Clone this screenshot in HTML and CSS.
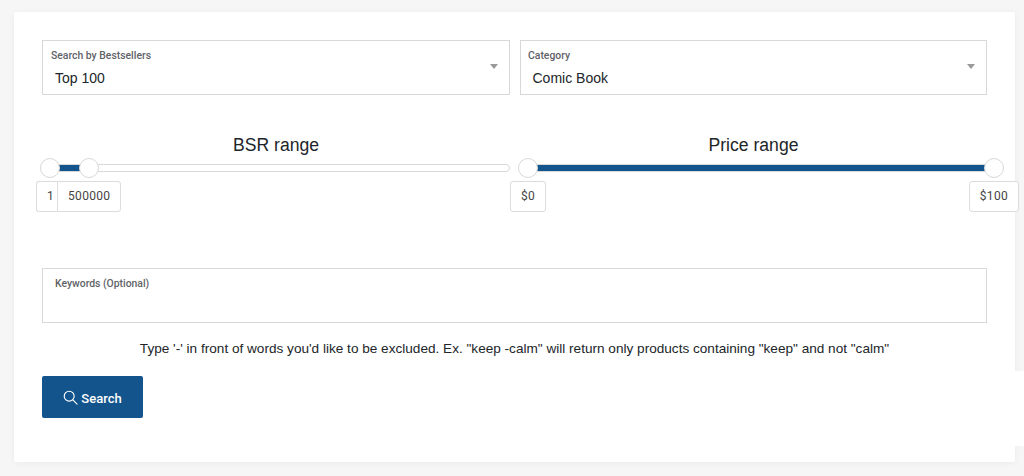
FILE: index.html
```html
<!DOCTYPE html>
<html lang="en">
<head>
<meta charset="utf-8">
<title>Search</title>
<link rel="stylesheet" href="styles.css">
</head>
<body>
<main class="card">
  <section class="selects">
    <div class="field select">
      <span class="field-label">Search by Bestsellers</span>
      <span class="select-value">Top 100</span>
      <span class="caret"></span>
    </div>
    <div class="field select">
      <span class="field-label">Category</span>
      <span class="select-value">Comic Book</span>
      <span class="caret"></span>
    </div>
  </section>
  <section class="ranges">
    <div class="range range-bsr">
      <h2 class="range-title">BSR range</h2>
      <div class="slider">
        <span class="fill fill-bsr"></span>
        <span class="handle handle-a"></span>
        <span class="handle handle-b"></span>
      </div>
      <div class="values">
        <span class="value value-first">1</span><span class="value value-joined">500000</span>
      </div>
    </div>
    <div class="range range-price">
      <h2 class="range-title">Price range</h2>
      <div class="slider slider-price">
        <span class="fill fill-price"></span>
        <span class="handle handle-c"></span>
        <span class="handle handle-d"></span>
      </div>
      <div class="values values-price">
        <span class="value">$0</span>
        <span class="value">$100</span>
      </div>
    </div>
  </section>
  <section class="field keywords">
    <span class="field-label">Keywords (Optional)</span>
  </section>
  <p class="hint">Type '-' in front of words you'd like to be excluded. Ex. "keep -calm" will return only products containing "keep" and not "calm"</p>
  <div class="actions">
    <button class="search" type="button">
      <svg class="search-icon" width="15" height="15" viewBox="0 0 16 16" fill="none" stroke="currentColor" stroke-width="1.2" aria-hidden="true"><circle cx="6.6" cy="6.6" r="5.3"/><path d="M10.5 10.5 15 15" stroke-linecap="round"/></svg>
      <span class="search-label">Search</span>
    </button>
  </div>
</main>
</body>
</html>
```

FILE: styles.css
```css
* { box-sizing: border-box; }

html, body {
  margin: 0;
  height: 476px;
  overflow: hidden;
}

body {
  background: #f6f6f6;
  font-family: "Liberation Sans", Arial, sans-serif;
  color: #212529;
  padding: 12px 9px 0 14px;
}

.card {
  width: 1001px;
  height: 450px;
  background: #fff;
  padding: 28px 28px 0;
  border-radius: 2px;
  box-shadow: 0 1px 6px rgba(0, 0, 0, 0.05);
}

.selects {
  display: grid;
  grid-template-columns: 468px 467px;
  gap: 10px;
}

.field {
  height: 55px;
  border: 1px solid #d8d8d8;
  background: #fff;
}

.select {
  position: relative;
  display: flex;
  flex-direction: column;
  padding: 9px 8px 0;
}

.field-label {
  font-family: Roboto, sans-serif;
  font-size: 10.4px;
  line-height: 12px;
  font-weight: 500;
  color: #5f6368;
}

.select-value {
  margin: 8px 0 0 4px;
  font-size: 14px;
  line-height: 17px;
  color: #212529;
}

.select + .select .field-label {
  margin-left: -1px;
}

.select + .select .select-value {
  margin-left: 3.5px;
}

.caret {
  position: absolute;
  top: 23px;
  right: 11px;
  width: 0;
  height: 0;
  border-left: 4.5px solid transparent;
  border-right: 4.5px solid transparent;
  border-top: 5px solid #999;
}

.ranges {
  display: grid;
  grid-template-columns: 468px 467px;
  gap: 10px;
  margin-top: 40px;
  height: 76px;
}

.range-title {
  margin: 0;
  height: 23px;
  text-align: center;
  font-size: 17.6px;
  line-height: 21px;
  font-weight: 400;
  color: #212529;
}

.slider {
  position: relative;
  height: 8px;
  margin-top: 6px;
  border: 1px solid #d8d8d8;
  border-radius: 4px;
  background: #fff;
}

.slider-price {
  margin-right: -8px;
}

.fill {
  position: absolute;
  top: 0;
  bottom: 0;
  background: #14548c;
}

.fill-bsr { left: 8px; width: 38px; }
.fill-price { left: 8px; right: 0; }

.handle {
  position: absolute;
  top: -7px;
  width: 20px;
  height: 20px;
  border: 1px solid #d8d8d8;
  border-radius: 50%;
  background: #fff;
}

.handle-a { left: -3px; }
.handle-b { left: 36px; }
.handle-c { left: -3px; }
.handle-d { right: -10px; }

.values {
  display: flex;
  margin: 9px 0 0 -6px;
}

.values-price {
  justify-content: space-between;
  margin: 9px -32px 0 -10px;
}

.value {
  height: 31px;
  padding: 0 10px;
  border: 1px solid #dcdcdc;
  border-radius: 3px;
  background: #fff;
  font-family: Roboto, sans-serif;
  font-size: 12px;
  line-height: 29px;
  letter-spacing: 0.3px;
  color: #444;
}

.value-first {
  padding: 0 3px 0 10px;
  border-right: 0;
  border-radius: 3px 0 0 3px;
}

.value-joined {
  border-radius: 0 3px 3px 0;
}

.keywords {
  margin-top: 57px;
  padding: 9px 12px 0;
}

.keywords .field-label {
  display: block;
}

.hint {
  margin: 18px 0 0;
  height: 30px;
  text-align: center;
  font-size: 13.6px;
  line-height: 16px;
  color: #212529;
}

.actions {
  height: 75px;
  margin-right: -37px;
  padding-top: 5px;
  background: #fff;
}

.search {
  display: flex;
  align-items: center;
  justify-content: center;
  gap: 3px;
  width: 101px;
  height: 42px;
  padding: 0;
  border: 0;
  border-radius: 2px;
  background: #14548c;
  color: #fff;
  font-family: Roboto, sans-serif;
  font-size: 13px;
  font-weight: 500;
}

.search-icon {
  flex: none;
}

.search-label {
  padding-top: 2px;
}
```
